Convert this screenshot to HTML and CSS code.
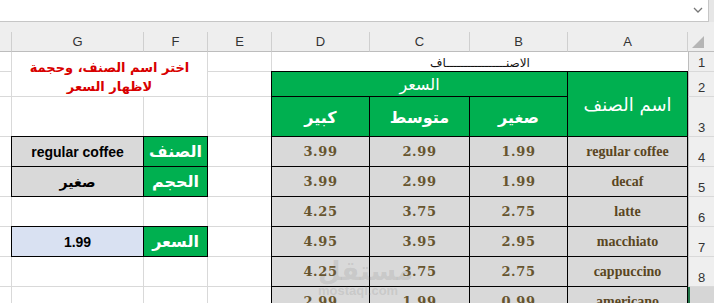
FILE: index.html
```html
<!DOCTYPE html>
<html lang="ar">
<head>
<meta charset="utf-8">
<title>Sheet</title>
<link rel="stylesheet" href="styles.css">
</head>
<body>
<div class="app">
  <div class="formula">
    <div class="fbox">
      <svg class="chev" width="10" height="6" viewBox="0 0 10 6"><path d="M1 1 L5 5 L9 1" fill="none" stroke="#777" stroke-width="1.3"/></svg>
    </div>
    <div class="fside"></div>
  </div>
  <div class="strip"></div>
  <div class="sheet">
    <!-- column headers -->
    <div class="ch"></div>
    <div class="ch">G</div>
    <div class="ch">F</div>
    <div class="ch">E</div>
    <div class="ch">D</div>
    <div class="ch">C</div>
    <div class="ch">B</div>
    <div class="ch">A</div>
    <div class="ch corner"><span class="tri"></span></div>

    <!-- row 1 -->
    <div class="c"></div>
    <div class="c note">اختر اسم الصنف، وحجمة<br>لاظهار السعر</div>
    <div class="c"></div>
    <div class="c title">الاصنـــــــــــــــــاف</div>
    <div class="rn">1</div>

    <!-- row 2 -->
    <div class="c"></div>
    <div class="c"></div>
    <div class="c bk gr priceh">السعر</div>
    <div class="c bk gr name">اسم الصنف</div>
    <div class="rn">2</div>

    <!-- row 3 -->
    <div class="c"></div>
    <div class="c"></div>
    <div class="c"></div>
    <div class="c"></div>
    <div class="c bk gr hd">كبير</div>
    <div class="c bk gr hd">متوسط</div>
    <div class="c bk gr hd">صغير</div>
    <div class="rn">3</div>

    <!-- row 4 -->
    <div class="c"></div>
    <div class="c bk gy val">regular coffee</div>
    <div class="c bk gr lab">الصنف</div>
    <div class="c"></div>
    <div class="c bk gy num">3.99</div>
    <div class="c bk gy num">2.99</div>
    <div class="c bk gy num">1.99</div>
    <div class="c bk gy prod">regular coffee</div>
    <div class="rn">4</div>

    <!-- row 5 -->
    <div class="c"></div>
    <div class="c bk gy val">صغير</div>
    <div class="c bk gr lab">الحجم</div>
    <div class="c"></div>
    <div class="c bk gy num">3.99</div>
    <div class="c bk gy num">2.99</div>
    <div class="c bk gy num">1.99</div>
    <div class="c bk gy prod">decaf</div>
    <div class="rn">5</div>

    <!-- row 6 -->
    <div class="c"></div>
    <div class="c"></div>
    <div class="c"></div>
    <div class="c"></div>
    <div class="c bk gy num">4.25</div>
    <div class="c bk gy num">3.75</div>
    <div class="c bk gy num">2.75</div>
    <div class="c bk gy prod">latte</div>
    <div class="rn">6</div>

    <!-- row 7 -->
    <div class="c"></div>
    <div class="c bk bl val">1.99</div>
    <div class="c bk gr lab">السعر</div>
    <div class="c"></div>
    <div class="c bk gy num">4.95</div>
    <div class="c bk gy num">3.95</div>
    <div class="c bk gy num">2.95</div>
    <div class="c bk gy prod">macchiato</div>
    <div class="rn">7</div>

    <!-- row 8 -->
    <div class="c"></div>
    <div class="c"></div>
    <div class="c"></div>
    <div class="c"></div>
    <div class="c bk gy num">4.25</div>
    <div class="c bk gy num">3.75</div>
    <div class="c bk gy num">2.75</div>
    <div class="c bk gy prod">cappuccino</div>
    <div class="rn">8</div>

    <!-- row 9 -->
    <div class="c"></div>
    <div class="c"></div>
    <div class="c"></div>
    <div class="c"></div>
    <div class="c bk gy num">2.99</div>
    <div class="c bk gy num">1.99</div>
    <div class="c bk gy num">0.99</div>
    <div class="c bk gy prod">americano</div>
    <div class="rn active">9</div>
  </div>
  <div class="wm">
    <div class="wm-ar">مستقل</div>
    <div class="wm-en">mostaql.com</div>
  </div>
</div>
</body>
</html>
```

FILE: styles.css
```css
html, body {
  margin: 0;
  padding: 0;
  background: #fff;
}
.app {
  position: relative;
  width: 714px;
  height: 303px;
  overflow: hidden;
  font-family: "Liberation Sans", "DejaVu Sans", sans-serif;
}
.formula {
  display: flex;
  height: 22px;
  background: #e6e6e6;
}
.fbox {
  width: 708px;
  height: 21px;
  background: #fff;
  border-right: 1px solid #c6c6c6;
  border-bottom: 1px solid #c6c6c6;
  display: flex;
  justify-content: flex-end;
  align-items: flex-start;
}
.chev {
  margin: 7px 5px 0 0;
}
.strip {
  height: 10px;
  background: #eeeeee;
}
.sheet {
  display: grid;
  grid-template-columns: 12px 132px 64px 64px 98px 100px 98px 120px 26px;
  grid-template-rows: 20px 20px 25px 40px 30px 30px 30px 30px 30px 30px;
}
.ch {
  background: #eeeeee;
  border-right: 1px solid #cfcfcf;
  border-bottom: 1px solid #bdbdbd;
  box-sizing: border-box;
  display: flex;
  align-items: center;
  justify-content: center;
  font-size: 13px;
  color: #333;
}
.corner {
  border-right: none;
  position: relative;
}
.tri {
  position: absolute;
  right: 10px;
  bottom: 3px;
  width: 0;
  height: 0;
  border-left: 12px solid transparent;
  border-bottom: 12px solid #b5b5b5;
}
.c {
  box-sizing: border-box;
  border-right: 1px solid #d9d9d9;
  border-bottom: 1px solid #d9d9d9;
  display: flex;
  align-items: center;
  justify-content: center;
  direction: rtl;
  white-space: nowrap;
}
.rn {
  box-sizing: border-box;
  background: #efefef;
  border-left: 1px solid #bdbdbd;
  border-bottom: 1px solid #d9d9d9;
  display: flex;
  align-items: flex-end;
  justify-content: center;
  padding-bottom: 1px;
  font-size: 13px;
  color: #333;
}
.rn.active {
  background: #d6d6d6;
  border-left: 2px solid #217346;
}
.note {
  grid-column: 2 / span 2;
  grid-row: 2 / span 2;
  flex-direction: column;
  justify-content: flex-start;
  padding-top: 6px;
  line-height: 19px;
  color: #d80000;
  font-weight: bold;
  font-size: 13px;
  font-family: "DejaVu Sans", sans-serif;
  text-align: center;
  white-space: normal;
}
.title {
  grid-column: 5 / span 4;
  font-size: 12px;
  font-family: "DejaVu Sans", sans-serif;
  color: #111;
  border-right: none;
  padding-top: 2px;
}
.bk {
  margin: -1px 0 0 -1px;
  border: 1px solid #000;
}
.gr {
  background: #00b050;
  color: #fff;
  font-family: "DejaVu Sans", sans-serif;
}
.gy {
  background: #d9d9d9;
}
.bl {
  background: #d9e1f2;
}
.hd {
  font-size: 16px;
  font-weight: bold;
  padding-top: 2px;
}
.priceh {
  grid-column: 5 / span 3;
  font-size: 16px;
}
.name {
  grid-column: 8;
  grid-row: 3 / span 2;
  font-size: 18px;
}
.lab {
  font-size: 16px;
  font-weight: bold;
}
.val {
  font-size: 14px;
  font-weight: bold;
  color: #000;
  font-family: "Liberation Sans", "DejaVu Sans", sans-serif;
}
.num {
  font-family: "DejaVu Serif", serif;
  font-weight: bold;
  font-size: 13px;
  color: #67552f;
  letter-spacing: 0.6px;
}
.prod {
  font-family: "Liberation Serif", serif;
  font-weight: bold;
  font-size: 14px;
  color: #5a4622;
  direction: ltr;
}
.wm {
  position: absolute;
  left: 318px;
  top: 258px;
  width: 80px;
  text-align: center;
  color: rgba(120, 120, 120, 0.18);
  pointer-events: none;
}
.wm-ar {
  font-family: "DejaVu Sans", sans-serif;
  font-weight: bold;
  font-size: 26px;
  line-height: 26px;
}
.wm-en {
  font-family: "Liberation Sans", sans-serif;
  font-weight: bold;
  font-size: 13px;
  line-height: 14px;
}
```
